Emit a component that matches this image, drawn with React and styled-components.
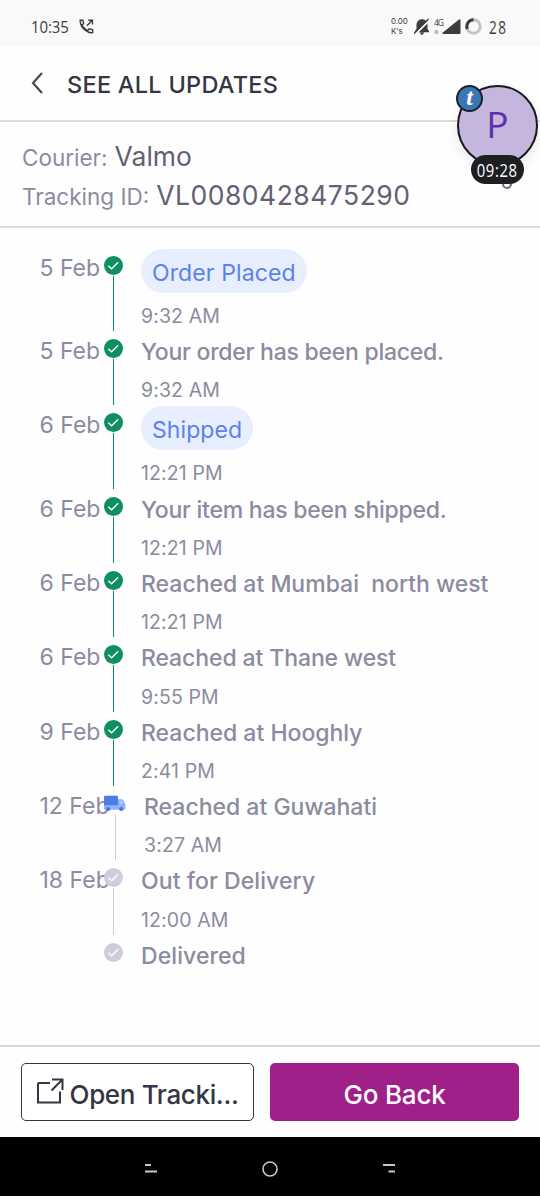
import React from "react";
import styled, { createGlobalStyle } from "styled-components";

const Global = createGlobalStyle`
  * { box-sizing: border-box; }
  body { margin: 0; background: #fefefe; font-family: Inter, "Liberation Sans", sans-serif; }
`;

const Screen = styled.div`
  position: relative;
  width: 540px;
  height: 1200px;
  display: flex;
  flex-direction: column;
  background: #fefefe;
  overflow: hidden;
`;

const StatusBar = styled.div`
  height: 46px;
  flex: none;
  display: flex;
  justify-content: space-between;
  padding: 6px 34px 0 31px;
  align-items: center;
  background: #f9f9f9;
  color: #3c3c3c;
  font-family: "Open Sans", sans-serif;
`;
const StatusGroup = styled.div`
  display: flex;
  align-items: center;
  gap: ${(p) => p.$gap}px;
`;
const Clock = styled.span`
  width: 38px;
  font-size: 17px;
  line-height: 20px;
  letter-spacing: -0.1px;
  transform: scaleX(0.88);
  transform-origin: left;
  padding-top: 1px;
`;
const Battery = styled.span`
  font-size: 18px;
  line-height: 20px;
  letter-spacing: 2px;
  margin-left: 3px;
  width: 17px;
  transform: scaleX(0.75);
  transform-origin: left;
  padding-top: 1px;
`;
const NetSpeed = styled.div`
  width: 19px;
  font-family: Inter, sans-serif;
  font-size: 8px;
  line-height: 10px;
  letter-spacing: -0.1px;
`;

const Header = styled.header`
  height: 76px;
  flex: none;
  display: flex;
  align-items: center;
  padding-left: 31px;
  gap: 24px;
  border-bottom: 2px solid #dadadf;
`;
const Title = styled.h1`
  margin: 3px 0 0;
  font-size: 23.5px;
  font-weight: 500;
  line-height: 30px;
  letter-spacing: 0.27px;
  color: #353543;
`;

const Courier = styled.section`
  height: 106px;
  flex: none;
  padding: 15px 22px 0;
  border-bottom: 2px solid #dadadf;
`;
const InfoRow = styled.div`
  display: flex;
  align-items: baseline;
  height: 39px;
  line-height: 38px;
  gap: 7px;
`;
const InfoLabel = styled.span`
  font-size: 22.5px;
  color: #8b8ba3;
`;
const InfoValue = styled.span`
  font-size: 26.5px;
  color: #616173;
  letter-spacing: ${(p) => p.$track || 0}px;
`;

const Timeline = styled.ol`
  list-style: none;
  margin: 0;
  padding: 21px 0 0 39.5px;
  flex: 1;
`;
const Step = styled.li`
  display: flex;
  height: ${(p) => (p.$pill ? 83.1 : 74.35)}px;
`;
const DateLabel = styled.div`
  width: 64.5px;
  flex: none;
  white-space: nowrap;
  font-size: 23px;
  line-height: 30px;
  padding-top: 4px;
  color: #8b8ba3;
`;
const Rail = styled.div`
  width: ${(p) => (p.$wide ? 22 : 19)}px;
  margin-right: 18px;
  flex: none;
  display: flex;
  flex-direction: column;
  align-items: center;
  padding-top: 7px;
  position: relative;
  svg { flex: none; display: block; }
`;
const Connector = styled.div`
  width: 1px;
  flex: 1;
  margin: 1px 0 1px;
  background: ${(p) => (p.$done ? "#0c8a60" : "#cbcbdb")};
`;
const Content = styled.div`
  display: flex;
  flex-direction: column;
  align-items: flex-start;
  white-space: pre;
`;
const Pill = styled.div`
  height: 43.5px;
  border-radius: 22px;
  padding: 3px 11px 0;
  background: #e7eefe;
  color: #5b82ea;
  font-size: 23px;
  line-height: 43px;
  letter-spacing: ${(p) => p.$track}px;
`;
const Event = styled.div`
  height: 34.8px;
  padding-top: 5px;
  font-size: 23px;
  font-weight: 500;
  line-height: 30px;
  color: #8b8ba0;
  letter-spacing: ${(p) => p.$track}px;
`;
const Time = styled.div`
  margin-top: 10.5px;
  font-size: 19.5px;
  line-height: 26px;
  letter-spacing: 0.12px;
  color: #8b8ba0;
`;

const Footer = styled.footer`
  height: 92px;
  flex: none;
  display: flex;
  gap: 16px;
  padding: 16px 21px 0;
  border-top: 2px solid #d6d6df;
`;
const Button = styled.button`
  width: ${(p) => (p.$primary ? 249 : 233)}px;
  height: 58px;
  padding: 4px 0 0;
  display: flex;
  align-items: center;
  justify-content: center;
  gap: 6px;
  border-radius: 5px;
  border: ${(p) => (p.$primary ? "none" : "1.5px solid #353543")};
  background: ${(p) => (p.$primary ? "#9f2089" : "#fff")};
  color: ${(p) => (p.$primary ? "#fff" : "#353543")};
  font-family: inherit;
  font-size: 26px;
  font-weight: 500;
  letter-spacing: ${(p) => (p.$primary ? -0.2 : -0.35)}px;
  svg { margin-bottom: 6px; }
`;
const NavBar = styled.nav`
  height: 59px;
  margin-bottom: 4px;
  flex: none;
  display: flex;
  align-items: center;
  justify-content: center;
  gap: 105px;
  padding-top: 4px;
  background: #000;
`;

const CallBubble = styled.div`
  position: absolute;
  left: 457px;
  top: 85px;
  width: 81px;
  height: 81px;
  border: 2px solid #17171d;
  border-radius: 50%;
  background: #c4b6df;
  box-shadow: 0 4px 12px rgba(0, 0, 0, 0.1);
  display: flex;
  align-items: center;
  justify-content: center;
  padding-bottom: 4px;
  color: #5c32a8;
  font-family: "Open Sans", sans-serif;
  font-size: 37px;
  font-weight: 500;
`;
const AppBadge = styled.div`
  position: absolute;
  left: -3px;
  top: -2px;
  width: 27px;
  height: 27px;
  border: 2px solid #17202b;
  border-radius: 50%;
  background: #3b76b4;
  color: #fff;
  display: flex;
  align-items: center;
  justify-content: center;
  padding-bottom: 4px;
  font: italic 700 24px/22px "Liberation Serif", serif;
`;
const Timer = styled.div`
  position: absolute;
  left: 12px;
  top: 68px;
  width: 53px;
  height: 29px;
  border-radius: 15px;
  background: #1d1f22;
  color: #fff;
  display: flex;
  align-items: center;
  justify-content: center;
  span {
    flex: none;
    font-size: 19px;
    font-weight: 400;
    letter-spacing: 0.8px;
    transform: scaleX(0.78);
  }
`;
const Handle = styled.div`
  position: absolute;
  left: 43px;
  top: 92px;
  width: 10px;
  height: 10px;
  border: 2px solid #70707a;
  border-radius: 50%;
`;

const CheckIcon = ({ color }) => (
  <svg width="19" height="19" viewBox="0 0 19 19" fill="none">
    <circle cx="9.5" cy="9.5" r="9.5" fill={color} />
    <path d="M4.3 9.800 7.600 12.800 14.200 6.300" stroke="#fff" strokeWidth="1.300" />
  </svg>
);
const TruckIcon = () => (
  <svg width="22" height="19" viewBox="0 0 22 19">
    <path d="M0 10.500h14V5.200h3.700q1.200 0 1.700 1l2 4v4.300q0 1.200-1.200 1.200H1.200Q0 15.700 0 14.500Z" fill="#8db1ff" />
    <path d="M15.600 6.800h2.200l1.400 3h-3.600Z" fill="#b4ccff" />
    <rect width="14" height="9.500" y="1.800" rx="1" fill="#4f7be4" />
    <circle cx="4.200" cy="15" r="2.100" fill="#4873d8" />
    <circle cx="17.200" cy="15" r="2.100" fill="#4873d8" />
  </svg>
);

const STEPS = [
  { date: "5 Feb", text: "Order Placed", time: "9:32 AM", pill: true, state: "done", track: 0.12 },
  { date: "5 Feb", text: "Your order has been placed.", time: "9:32 AM", state: "done", track: -0.25 },
  { date: "6 Feb", text: "Shipped", time: "12:21 PM", pill: true, state: "done", track: 0.08 },
  { date: "6 Feb", text: "Your item has been shipped.", time: "12:21 PM", state: "done", track: -0.24 },
  { date: "6 Feb", text: "Reached at Mumbai  north west", time: "12:21 PM", state: "done", track: 0 },
  { date: "6 Feb", text: "Reached at Thane west", time: "9:55 PM", state: "done", track: -0.1 },
  { date: "9 Feb", text: "Reached at Hooghly", time: "2:41 PM", state: "done", track: 0 },
  { date: "12 Feb", text: "Reached at Guwahati", time: "3:27 AM", state: "moving", track: 0 },
  { date: "18 Feb", text: "Out for Delivery", time: "12:00 AM", state: "next", track: 0.08 },
  { date: "", text: "Delivered", time: "", state: "next", track: 0.08 },
];

export default function App() {
  return (
    <Screen>
      <Global />
      <StatusBar>
        <StatusGroup $gap={10}>
          <Clock>10:35</Clock>
          <svg width="15" height="15" viewBox="0 0 15 15" fill="none" stroke="#3c3c3c" strokeWidth="1.4">
            <path d="M1.200 1.200h2.600l.8 3.400-1.800 1.600Q4.800 9.600 8.600 11.600l1.600-1.700 3.500 1v2.600Q10 14.500 5.500 10.800 1 6.500 1.200 1.200Z" />
            <path d="M8 6.800 13 1.600M9.300 1.200h4.200v4.200" />
          </svg>
        </StatusGroup>
        <StatusGroup $gap={4}>
          <NetSpeed>
            <div>0.00</div>
            <div>K's</div>
          </NetSpeed>
          <svg width="16" height="17" viewBox="0 0 16 17">
            <path d="M8 1Q13.500 2 13.500 7v4l1.500 2v1.200H1V13l1.500-2V7Q2.500 2 8 1ZM6 14.500h4Q9.500 16.800 8 16.800T6 14.500Z" fill="#3c3c3c" />
            <path d="M.8 16.800 15.800 1.800" stroke="#f9f9f9" strokeWidth="2" />
            <path d="M0 15.500 14.500 1" stroke="#3c3c3c" strokeWidth="1.500" />
          </svg>
          <svg width="27" height="17" viewBox="0 0 27 17">
            <text x="0" y="7.500" fontSize="8.500" fontFamily="Open Sans" fill="#3c3c3c" textLength="10">4G</text>
            <circle cx="2.500" cy="14" r="2.200" fill="#bfbfbf" />
            <path d="M8.500 14.800 25 1.500Q26.500 .8 26.500 2.500V15q0 1-1 1h-16Q7.800 16 8.500 14.800Z" fill="#3c3c3c" />
          </svg>
          <svg width="17" height="17" viewBox="0 0 17 17" fill="none" strokeWidth="3">
            <circle cx="8.500" cy="8.500" r="6.700" stroke="#c4c4c4" />
            <path d="M2.300 11A6.700 6.700 0 0 1 8.500 1.800" stroke="#3c3c3c" />
          </svg>
          <Battery>28</Battery>
        </StatusGroup>
      </StatusBar>

      <Header>
        <svg width="12" height="22" viewBox="0 0 12 22" fill="none" stroke="#4a4a57" strokeWidth="2.200">
          <path d="M11 1 2 11l9 10" />
        </svg>
        <Title>SEE ALL UPDATES</Title>
      </Header>

      <Courier>
        <InfoRow>
          <InfoLabel>Courier:</InfoLabel>
          <InfoValue>Valmo</InfoValue>
        </InfoRow>
        <InfoRow>
          <InfoLabel>Tracking ID:</InfoLabel>
          <InfoValue $track={0.5}>VL0080428475290</InfoValue>
        </InfoRow>
      </Courier>

      <Timeline>
        {STEPS.map((s, i) => (
          <Step key={i} $pill={s.pill}>
            <DateLabel>{s.date}</DateLabel>
            <Rail $wide={s.state === "moving"}>
              {s.state === "moving" ? <TruckIcon /> : <CheckIcon color={s.state === "done" ? "#0f8e62" : "#cfcddd"} />}
              {i < STEPS.length - 1 && <Connector $done={s.state === "done"} />}
            </Rail>
            <Content>
              {s.pill ? <Pill $track={s.track}>{s.text}</Pill> : <Event $track={s.track}>{s.text}</Event>}
              {s.time && <Time>{s.time}</Time>}
            </Content>
          </Step>
        ))}
      </Timeline>

      <Footer>
        <Button>
          <svg width="27" height="27" viewBox="0 0 27 27" fill="none" stroke="#353543" strokeWidth="2">
            <path d="M13 5H2.200Q1 5 1 6.200V24.500h22V13.500M15 1.500h10.500V12M25.500 1.500 14.500 12.500" />
          </svg>
          Open Tracki...
        </Button>
        <Button $primary>Go Back</Button>
      </Footer>
      <NavBar>
        <svg width="12" height="9" viewBox="0 0 12 9" stroke="#c8c8c8" strokeWidth="2">
          <path d="M0 1h6M0 7.500h12" />
        </svg>
        <svg width="16" height="16" viewBox="0 0 16 16" fill="none" stroke="#c8c8c8" strokeWidth="1.600">
          <circle cx="8" cy="8" r="7" />
        </svg>
        <svg width="12" height="9" viewBox="0 0 12 9" stroke="#c8c8c8" strokeWidth="2">
          <path d="M0 1h12M5.500 7.500H12" />
        </svg>
      </NavBar>

      <CallBubble>
        P
        <AppBadge>t</AppBadge>
        <Handle />
        <Timer>
          <span>09:28</span>
        </Timer>
      </CallBubble>
    </Screen>
  );
}
